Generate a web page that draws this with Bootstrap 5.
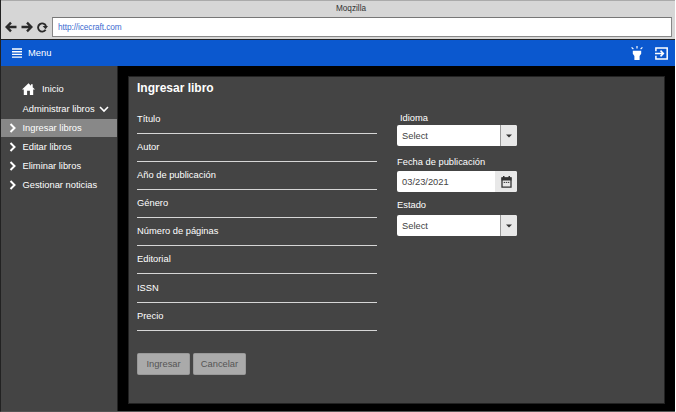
<!DOCTYPE html>
<html lang="es">
<head>
<meta charset="utf-8">
<meta name="viewport" content="width=device-width, initial-scale=1">
<title>Moqzilla</title>
<link href="https://cdn.jsdelivr.net/npm/bootstrap@5.3.0/dist/css/bootstrap.min.css" rel="stylesheet">
<style>
body{font-family:"Liberation Sans",Arial,sans-serif;font-size:9.33px;line-height:12px;width:676px;height:412px;overflow:hidden;background:#fff;color:#fff}
svg{display:block;flex:none}
.window{width:675px;height:412px;background:#000;border-left:1px solid #222;border-bottom:1px solid #555}
.chrome{height:40px;background:#d6d6d6;border-top:1px solid #aaa;border-bottom:1px solid #222;color:#333}
.win-title{font-size:8.2px;height:16px;line-height:15px;padding-left:26px}
.tools{height:20px;padding-left:4px;padding-right:3px}
.address{height:20px;margin-left:4px;border:1px solid #888;border-top-color:#777;background:#fff;color:#3c6cd0;font-size:8.3px;letter-spacing:-.1px;line-height:18px;padding-left:5px}
.topbar{height:26px;background:#0b58cf;padding:0 7px 0 11px}
.menu-label{margin-left:6px}
.side{width:117px;background:#444;padding-top:13px;border-right:1px solid #222}
.side a{color:#fff;height:19.1px;padding-left:8px;text-decoration:none}
.side a svg.arrow{margin-right:6.5px}
.side a.home{height:20px;padding-left:21px}
.home-label{margin-left:7px}
.side a.group{padding-left:21.5px;height:20px}
.side a.current{background:#888;height:18px}
.panel{width:537px;height:328px;margin:10px 0 0 10px;background:#444;border:1px solid #222;padding:4px 8px}
.panel h1{font-size:12px;line-height:14px;margin:0;font-weight:700}
.fields{width:240px;margin-top:16px}
.field{height:28.2px;padding-top:1.5px}
.line-input{display:block;width:100%;height:11px;border:0;border-bottom:1px solid #d6d6d6;background:transparent;padding:0;margin-top:-2px}
.actions{gap:3px}
.options{width:120px;margin:16px 0 0 20px}
.options label{display:block;height:14px;line-height:14px}
.options .lang-label{padding-left:3px}
.options .date-label{margin-top:9px;height:16px}
.options .state-label{margin-top:6px;height:17px}
.combo{height:21px;background:#fff;color:#444;border-radius:2px;overflow:hidden}
.combo span{padding-left:5px}
.combo i{width:17px;background:#e8e8e8;border-left:1px solid #999}
.combo i.cal{width:22px;border-left-color:#e8e8e8}
.gbtn{--bs-btn-font-size:9.33px;--bs-btn-padding-x:0;--bs-btn-padding-y:0;--bs-btn-border-radius:1.5px;--bs-btn-bg:#aaa;--bs-btn-color:#555;--bs-btn-border-color:#999;width:53px;height:22px;line-height:20px}
</style>
<script src="https://cdn.jsdelivr.net/npm/bootstrap@5.3.0/dist/js/bootstrap.bundle.min.js"></script>
</head>
<body>
<div class="window d-flex flex-column">
  <header class="chrome">
    <div class="win-title text-center">Moqzilla</div>
    <div class="tools d-flex align-items-center">
      <svg width="12" height="12" viewBox="0 0 12 12" fill="none" stroke="#2b2b2b" stroke-width="2.4"><path d="M11.5 6H2M6 1.6 1.6 6 6 10.4"/></svg>
      <svg class="ms-1" width="12" height="12" viewBox="0 0 12 12" fill="none" stroke="#2b2b2b" stroke-width="2.4"><path d="M.5 6H10M6 1.6 10.4 6 6 10.4"/></svg>
      <svg class="ms-1" width="11" height="12" viewBox="0 0 11 12"><path d="M8.6 8.8A4.1 4.1 0 1 1 9 5" fill="none" stroke="#2b2b2b" stroke-width="1.9"/><path d="M5.6 4.9H11L8.6 8.2z" fill="#2b2b2b"/></svg>
      <div class="address flex-grow-1">http://icecraft.com</div>
    </div>
  </header>
  <nav class="topbar d-flex align-items-center">
    <svg width="10" height="10" viewBox="0 0 10 10" stroke="#fff" stroke-width="1.4"><path d="M0 1h10M0 3.7h10M0 6.4h10M0 9.1h10"/></svg>
    <span class="menu-label">Menu</span>
    <svg class="ms-auto" width="12" height="14" viewBox="0 0 12 14" fill="#fff"><path d="M1.8 4.8h8.4v3L8.6 10v4H3.4v-4L1.8 7.8z"/><path d="M6 0v2.5M.6 1.3l1.8 1.8M11.4 1.3 9.6 3.1" stroke="#fff" stroke-width="1.2"/></svg>
    <svg class="ms-2" width="17" height="13" viewBox="-4 0 17 13" fill="none" stroke="#fff" stroke-width="1.5"><path d="M.9 4.2V.9h11.3v11.2H.9V8.8M0 6.5h8.2M5.5 3.6l2.9 2.9-2.9 2.9"/></svg>
  </nav>
  <div class="d-flex flex-grow-1">
    <aside class="side">
      <a class="home d-flex align-items-center" href="#"><svg width="13" height="12" viewBox="0 0 13 12" fill="#fff"><path d="M6.5.3 9 2.7V1.2h1.7v3L13 6.5h-1.8V12H7.9V7.7H5.1V12H1.8V6.5H0z"/></svg><span class="home-label">Inicio</span></a>
      <a class="group d-flex align-items-center" href="#">Administrar libros<svg class="ms-1" width="10" height="7" viewBox="0 0 10 7" fill="none" stroke="#fff" stroke-width="1.6"><path d="m1 1 4 4 4-4"/></svg></a>
      <a class="current d-flex align-items-center" href="#"><svg class="arrow" width="7" height="10" viewBox="0 0 7 10" fill="none" stroke="#fff" stroke-width="2"><path d="m1.5 1 4 4-4 4"/></svg>Ingresar libros</a>
      <a class="d-flex align-items-center" href="#"><svg class="arrow" width="7" height="10" viewBox="0 0 7 10" fill="none" stroke="#fff" stroke-width="2"><path d="m1.5 1 4 4-4 4"/></svg>Editar libros</a>
      <a class="d-flex align-items-center" href="#"><svg class="arrow" width="7" height="10" viewBox="0 0 7 10" fill="none" stroke="#fff" stroke-width="2"><path d="m1.5 1 4 4-4 4"/></svg>Eliminar libros</a>
      <a class="d-flex align-items-center" href="#"><svg class="arrow" width="7" height="10" viewBox="0 0 7 10" fill="none" stroke="#fff" stroke-width="2"><path d="m1.5 1 4 4-4 4"/></svg>Gestionar noticias</a>
    </aside>
    <main class="panel">
      <h1>Ingresar libro</h1>
      <div class="d-flex">
        <form>
          <div class="fields">
            <div class="field"><label class="d-block" for="f1">Título</label><input class="line-input" id="f1"></div>
            <div class="field"><label class="d-block" for="f2">Autor</label><input class="line-input" id="f2"></div>
            <div class="field"><label class="d-block" for="f3">Año de publicación</label><input class="line-input" id="f3"></div>
            <div class="field"><label class="d-block" for="f4">Género</label><input class="line-input" id="f4"></div>
            <div class="field"><label class="d-block" for="f5">Número de páginas</label><input class="line-input" id="f5"></div>
            <div class="field"><label class="d-block" for="f6">Editorial</label><input class="line-input" id="f6"></div>
            <div class="field"><label class="d-block" for="f7">ISSN</label><input class="line-input" id="f7"></div>
            <div class="field"><label class="d-block" for="f8">Precio</label><input class="line-input" id="f8"></div>
          </div>
          <div class="actions d-flex mt-3"><button type="button" class="btn gbtn">Ingresar</button><button type="button" class="btn gbtn">Cancelar</button></div>
        </form>
        <div class="options">
          <label class="lang-label">Idioma</label>
          <div class="combo d-flex justify-content-between align-items-center"><span>Select</span><i class="h-100 d-flex align-items-center justify-content-center"><svg width="6" height="4" viewBox="0 0 6 4" fill="#333"><path d="M0 .5h6l-3 3z"/></svg></i></div>
          <label class="date-label">Fecha de publicación</label>
          <div class="combo d-flex justify-content-between align-items-center"><span>03/23/2021</span><i class="cal h-100 d-flex align-items-center justify-content-center"><svg width="11" height="12" viewBox="0 0 11 12"><path d="M1 2h9v9.2H1z" fill="none" stroke="#333" stroke-width="1.3"/><path d="M.5 1.5h10v3H.5zM2 0h1.5v2H2zM7.5 0H9v2H7.5z" fill="#333"/><path d="M2.7 6.4h5.6" stroke="#333" stroke-dasharray="1.4 .7"/></svg></i></div>
          <label class="state-label">Estado</label>
          <div class="combo d-flex justify-content-between align-items-center"><span>Select</span><i class="h-100 d-flex align-items-center justify-content-center"><svg width="6" height="4" viewBox="0 0 6 4" fill="#333"><path d="M0 .5h6l-3 3z"/></svg></i></div>
        </div>
      </div>
    </main>
  </div>
</div>
</body>
</html>
